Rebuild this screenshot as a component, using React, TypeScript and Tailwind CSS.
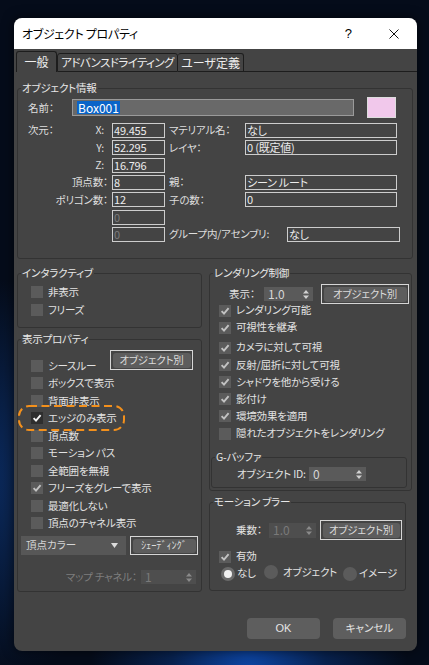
import React from 'react';

const jp = "font-['Noto_Sans_CJK_JP',sans-serif] [font-feature-settings:'palt']";

const Group: React.FC<{ title: string; className?: string; children?: React.ReactNode }> = ({ title, className = '', children }) => (
  <fieldset className={`border border-[#333333] rounded-[3px] min-w-0 ${className}`}>
    <legend className="ml-[3px] px-[1px] text-[10.5px] tracking-[-0.2px] leading-[14px] text-[#e8e8e8] whitespace-nowrap">{title}</legend>
    {children}
  </fieldset>
);

const Check: React.FC<{ checked?: boolean; dark?: boolean }> = ({ checked, dark }) => (
  <span className={`w-[12px] h-[12px] shrink-0 flex items-center justify-center ${dark ? 'bg-[#2e2e2e]' : 'bg-[#5b5b5b]'}`}>
    {checked && (
      <svg width="10" height="10" viewBox="0 0 10 10">
        <path d="M1.6 5.1 L4 7.6 L8.6 2.2" fill="none" stroke={dark ? '#f4f4f4' : '#c2c2c2'} strokeWidth="1.9" />
      </svg>
    )}
  </span>
);

const CheckRow: React.FC<{ label: string; checked?: boolean; dark?: boolean; h?: string }> = ({ label, checked, dark, h = 'h-[17.5px]' }) => (
  <div className={`flex items-center gap-[5px] whitespace-nowrap ${h}`}>
    <Check checked={checked} dark={dark} />
    <span className="text-[10.5px] tracking-[-0.2px] leading-none text-[#e2e2e2]">{label}</span>
  </div>
);

const Field: React.FC<{ value: string; w: string; dim?: boolean }> = ({ value, w, dim }) => (
  <div className={`${w} h-[15px] border border-[#cdcdcd] bg-[#444444] flex items-center pl-[1px] text-[11px] leading-none whitespace-nowrap ${dim ? 'text-[#7c7c7c]' : 'text-[#ececec]'}`}>
    {value}
  </div>
);

const Arrows: React.FC<{ color: string }> = ({ color }) => (
  <svg width="6" height="9" viewBox="0 0 6 9">
    <path d="M3 0 L6 3.6 L0 3.6 Z M3 9 L6 5.4 L0 5.4 Z" fill={color} />
  </svg>
);

const Spin: React.FC<{ value: string; w: string; h: string; disabled?: boolean }> = ({ value, w, h, disabled }) => (
  <div className={`${w} ${h} shrink-0 flex items-center justify-between pl-[4px] pr-[4px] text-[12px] leading-none ${disabled ? 'bg-[#4e4e4e] text-[#7a7a7a]' : 'bg-[#5a5a5a] text-[#d6d6d6]'}`}>
    <span>{value}</span>
    <Arrows color={disabled ? '#8a8a8a' : '#d0d0d0'} />
  </div>
);

const FocusBtn: React.FC<{ label: string; w: string; h: string }> = ({ label, w, h }) => (
  <div className={`${w} ${h} shrink-0 border border-[#d6d6d6] p-[1.5px] flex`}>
    <div className="flex-1 rounded-[3px] bg-[#5d5d5d] flex items-center justify-center text-[10.5px] tracking-[-0.2px] leading-none text-[#dadada] whitespace-nowrap">
      {label}
    </div>
  </div>
);

const Radio: React.FC<{ on?: boolean }> = ({ on }) => (
  <span className={`w-[14px] h-[14px] rounded-full shrink-0 flex items-center justify-center ${on ? 'bg-[#6a6a6a]' : 'bg-[#5b5b5b]'}`}>
    {on && <span className="w-[8px] h-[8px] rounded-full bg-[#f0f0f0]" />}
  </span>
);

const DimRow: React.FC<{
  left?: string;
  axis: string;
  value: string;
  dim?: boolean;
  rLabel?: string;
  rValue?: string;
  group?: boolean;
}> = ({ left, axis, value, dim, rLabel, rValue, group }) => (
  <div className="flex items-center h-[15px] pl-[10px] text-[10.5px] tracking-[-0.2px] leading-none text-[#dedede] whitespace-nowrap">
    <div className="w-[80px] flex justify-between">
      <span>{left}</span>
      <span className={axis.length < 3 ? 'pr-[4px]' : ''}>{axis}</span>
    </div>
    <div className="ml-[4px]">
      <Field value={value} w="w-[53px]" dim={dim} />
    </div>
    {rLabel !== undefined && (
      <>
        <span className={`ml-[4px] ${group ? 'w-[118px]' : 'w-[76px]'}`}>{rLabel}</span>
        <Field value={rValue || ''} w={group ? 'w-[113px]' : 'w-[152px]'} />
      </>
    )}
  </div>
);

const App: React.FC = () => {
  return (
    <div className={`w-[429px] h-[665px] overflow-hidden pt-[18px] pl-[14px] bg-[#050c1a] bg-[radial-gradient(ellipse_at_58%_104%,#0d47a8_0%,#08224f_22%,transparent_45%),radial-gradient(ellipse_at_-8%_72%,#0c2d63_0%,transparent_30%)] ${jp}`}>
      <div className="w-[403px] h-[633px] rounded-[8px] overflow-hidden bg-[#444444] flex flex-col shadow-[0_0_12px_rgba(0,0,0,0.6)]">
        {/* title bar */}
        <div className="h-[31px] bg-white flex items-center pl-[8px] pr-[18px] text-black">
          <span className="text-[12px] leading-none tracking-[-0.3px]">オブジェクト プロパティ</span>
          <span className="ml-auto text-[13px] leading-none mr-[37px] font-['Liberation_Sans',sans-serif]">?</span>
          <svg width="10" height="10" viewBox="0 0 10 10">
            <path d="M0.5 0.5 L9.5 9.5 M9.5 0.5 L0.5 9.5" stroke="#111" strokeWidth="1" />
          </svg>
        </div>

        {/* tabs */}
        <div className="h-[23px] flex items-end pl-[2px] text-[12px] leading-none text-[#eeeeee] whitespace-nowrap">
          <div className="w-[41px] h-[21px] border border-b-0 border-[#1d1d1d] rounded-t-[3px] flex items-center justify-center">一般</div>
          <div className="w-[121px] h-[19px] border border-[#1d1d1d] rounded-t-[3px] flex items-center justify-center text-[11.5px] tracking-[-0.6px]">アドバンスドライティング</div>
          <div className="w-[66px] h-[19px] border border-l-0 border-[#1d1d1d] rounded-t-[3px] flex items-center justify-center">ユーザ定義</div>
          <div className="flex-1 border-b border-[#1d1d1d]" />
        </div>

        <div className="px-[3px]">
          {/* object info */}
          <Group title="オブジェクト情報" className="mt-[9px] w-[396px] h-[178px]">
            <div className="mt-[2px] h-[21px] flex items-center pl-[10px] text-[10.5px] text-[#dedede]">
              <span className="w-[44px]">名前：</span>
              <div className="w-[282px] h-[17px] border border-[#9a9a9a] bg-[#696969] flex items-center pl-[4px]">
                <span className="bg-[#0a64c8] text-white text-[12px] leading-[13px] px-[1px]">Box001</span>
              </div>
              <div className="ml-[13px] w-[29px] h-[21px] bg-[#f1c8eb] border border-[#dddddd]" />
            </div>
            <div className="mt-[5px] flex flex-col gap-[2.33px]">
              <DimRow left="次元：" axis="X:" value="49.455" rLabel="マテリアル名：" rValue="なし" />
              <DimRow axis="Y:" value="52.295" rLabel="レイヤ：" rValue="0 (既定値)" />
              <DimRow axis="Z:" value="16.796" />
              <DimRow axis="頂点数：" value="8" rLabel="親：" rValue="シーン ルート" />
              <DimRow axis="ポリゴン数：" value="12" rLabel="子の数：" rValue="0" />
              <DimRow axis="" value="0" dim />
              <DimRow axis="" value="0" dim rLabel="グループ内/アセンブリ:" rValue="なし" group />
            </div>
          </Group>

          <div className="mt-[7px] flex gap-[7px]">
            {/* left column */}
            <div className="w-[185px] flex flex-col">
              <Group title="インタラクティブ" className="h-[62px]">
                <div className="pt-[3px] pl-[13px]">
                  <CheckRow label="非表示" h="h-[18px]" />
                  <CheckRow label="フリーズ" h="h-[18px]" />
                </div>
              </Group>

              <Group title="表示プロパティ" className="mt-[4px] h-[260px]">
                <div className="flex">
                  <div className="flex-1 min-w-0 pl-[13px] mt-[11px] flex flex-col">
                    <CheckRow label="シースルー" />
                    <CheckRow label="ボックスで表示" />
                    <CheckRow label="背面非表示" />
                    <div className="relative">
                      <CheckRow label="エッジのみ表示" checked dark />
                      <svg className="absolute left-[-13px] top-[-5px] pointer-events-none" width="108" height="27" viewBox="0 0 108 27">
                        <rect x="1" y="1" width="105" height="24" rx="10" fill="none" stroke="#f3901c" strokeWidth="2" strokeDasharray="8 4.5" />
                      </svg>
                    </div>
                    <CheckRow label="頂点数" />
                    <CheckRow label="モーション パス" />
                    <CheckRow label="全範囲を無視" />
                    <CheckRow label="フリーズをグレーで表示" checked />
                    <CheckRow label="最適化しない" />
                    <CheckRow label="頂点のチャネル表示" />
                  </div>
                  <div className="mt-[4px] mr-[8px]">
                    <FocusBtn label="オブジェクト別" w="w-[83px]" h="h-[20px]" />
                  </div>
                </div>
                <div className="mt-[4px] ml-[3px] flex gap-[4px]">
                  <div className="w-[105px] h-[19px] bg-[#575757] flex items-center justify-between pl-[5px] pr-[8px] text-[10.5px] leading-none text-[#d4d4d4]">
                    <span>頂点カラー</span>
                    <svg width="7" height="5" viewBox="0 0 7 5">
                      <path d="M0 0 L7 0 L3.5 5 Z" fill="#dcdcdc" />
                    </svg>
                  </div>
                  <FocusBtn label="ｼｪｰﾃﾞｨﾝｸﾞ" w="w-[68px]" h="h-[19px]" />
                </div>
                <div className="mt-[15px] pr-[5px] flex items-center justify-end gap-[4px] text-[10.5px] tracking-[-0.2px] leading-none text-[#7e7e7e] whitespace-nowrap">
                  <span>マップ チャネル：</span>
                  <Spin value="1" w="w-[55px]" h="h-[14px]" disabled />
                </div>
              </Group>
            </div>

            {/* right column */}
            <div className="w-[203px] flex flex-col">
              <Group title="レンダリング制御" className="h-[225px]">
                <div className="mt-[4px] h-[20px] flex items-center pl-[19px] text-[10.5px] leading-none text-[#e2e2e2] whitespace-nowrap">
                  <span className="w-[35px]">表示：</span>
                  <Spin value="1.0" w="w-[49px]" h="h-[14px]" />
                  <div className="ml-[8px]">
                    <FocusBtn label="オブジェクト別" w="w-[88px]" h="h-[20px]" />
                  </div>
                </div>
                <div className="pl-[9px] flex flex-col">
                  <div className="-mt-[2px]">
                    <CheckRow label="レンダリング可能" checked h="h-[17px]" />
                    <CheckRow label="可視性を継承" checked h="h-[17px]" />
                  </div>
                  <div className="mt-[3px]">
                    <CheckRow label="カメラに対して可視" checked h="h-[17.2px]" />
                    <CheckRow label="反射/屈折に対して可視" checked h="h-[17.2px]" />
                    <CheckRow label="シャドウを他から受ける" checked h="h-[17.2px]" />
                    <CheckRow label="影付け" checked h="h-[17.2px]" />
                    <CheckRow label="環境効果を適用" checked h="h-[17.2px]" />
                    <CheckRow label="隠れたオブジェクトをレンダリング" h="h-[17.2px]" />
                  </div>
                </div>
                <Group title="G-バッファ" className="mt-[8px] ml-[1px] w-[196px] h-[38px]">
                  <div className="mt-[3px] pl-[25px] flex items-center text-[10.5px] tracking-[-0.2px] leading-none text-[#e2e2e2] whitespace-nowrap">
                    <span className="w-[72px]">オブジェクト ID:</span>
                    <Spin value="0" w="w-[57px]" h="h-[14px]" />
                  </div>
                </Group>
              </Group>

              <Group title="モーション ブラー" className="mt-[4px] w-[197px] h-[96px]">
                <div className="mt-[11px] h-[20px] flex items-center pl-[26px] text-[10.5px] leading-none text-[#e2e2e2] whitespace-nowrap">
                  <span className="w-[33px]">乗数：</span>
                  <Spin value="1.0" w="w-[47px]" h="h-[15px]" disabled />
                  <div className="ml-[4px]">
                    <FocusBtn label="オブジェクト別" w="w-[82px]" h="h-[20px]" />
                  </div>
                </div>
                <div className="mt-[8px] pl-[9px]">
                  <CheckRow label="有効" checked h="h-[17px]" />
                </div>
                <div className="h-[17px] pl-[11px] flex items-center text-[10.5px] tracking-[-0.2px] leading-none text-[#e2e2e2] whitespace-nowrap">
                  <Radio on />
                  <span className="ml-[2px] w-[16px]">なし</span>
                  <span className="ml-[11px] -mt-[3px]"><Radio /></span>
                  <span className="ml-[5px] w-[56px] -mt-[3px]">オブジェクト</span>
                  <span className="ml-[4px]"><Radio /></span>
                  <span className="ml-[2px]">イメージ</span>
                </div>
              </Group>
            </div>
          </div>
        </div>

        {/* buttons */}
        <div className="mt-[26px] pr-[11px] flex justify-end gap-[13px]">
          <button className="w-[73px] h-[21px] rounded-[4px] bg-[#5e5e5e] text-[11px] leading-none text-[#e4e4e4] font-['Liberation_Sans',sans-serif]">OK</button>
          <button className="w-[73px] h-[21px] rounded-[4px] bg-[#5e5e5e] text-[10.5px] leading-none text-[#e4e4e4]">キャンセル</button>
        </div>
      </div>
    </div>
  );
};

export default App;
